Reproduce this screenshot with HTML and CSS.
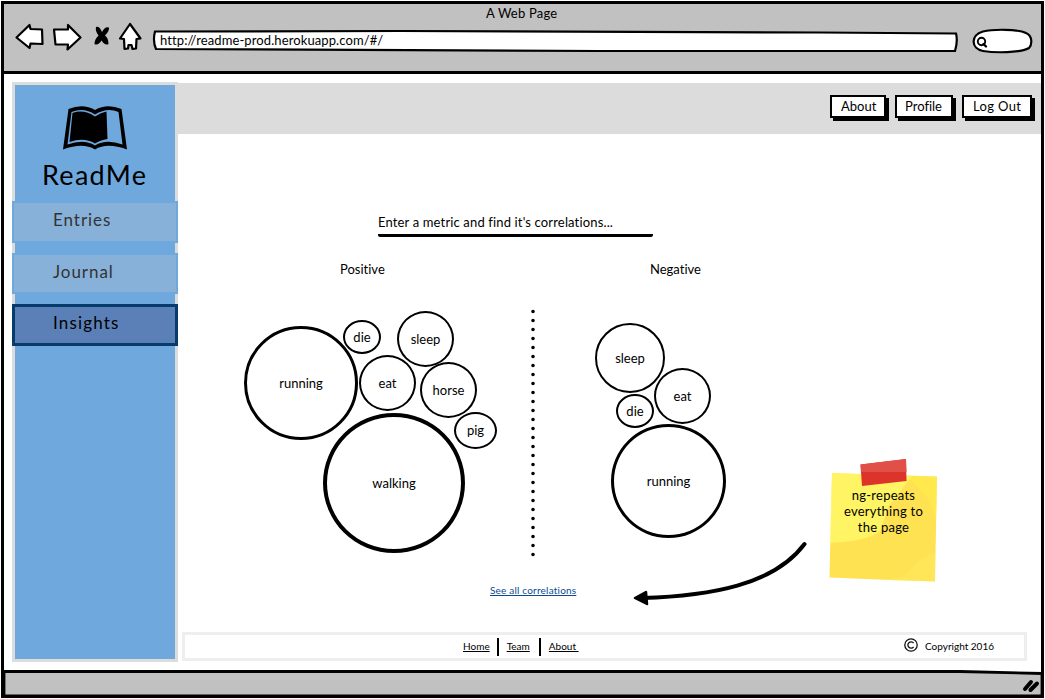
FILE: index.html
```html
<!DOCTYPE html>
<html lang="en">
<head>
<meta charset="utf-8">
<title>A Web Page</title>
<link rel="stylesheet" href="styles.css">
</head>
<body>
<div class="window">
  <header class="chrome">
    <div class="chrome-title"><span class="t-title">A Web Page</span></div>
    <div class="chrome-row">
      <svg class="nav-icons" width="128" height="32" viewBox="14 22 128 32">
        <g fill="#fff" stroke="#000" stroke-width="2.2" stroke-linejoin="round">
          <path d="M16.500 37.500 L29.500 25 L30.500 29 L42 29.500 L42.500 44 L30.500 43.500 L29.500 48 Z"/>
          <path d="M80.500 37.500 L68 25 L68 29.500 L54 29.500 L55.500 44.500 L68 44.500 L67.500 49.500 Z"/>
          <path d="M130 24 L120 38.500 L124 39 L124.500 49 L128 48.500 L128.500 45 L131.500 45 L132.500 49 L136 48.500 L136.500 39 L140.500 38.500 Z"/>
        </g>
        <path d="M96 27 Q99.500 26 102 32 Q105 26 109 27.500 Q109.500 31 105 35.500 Q108.500 38 108.500 44 Q105 46 101.500 40.500 Q98 46 94.500 44 Q94.500 39.500 98.500 35.500 Q95 31 96 27 Z"/>
      </svg>
      <div class="address">
        <svg class="shape" width="806" height="24" viewBox="152 29 806 24"><path d="M155 31.500 L400 31 L820 32.500 L956 33.500 Q958 41 955 51 L600 51 L156 49 Q152.500 41 155 31.500 Z" fill="#fff" stroke="#000" stroke-width="2.200"/></svg>
        <span class="t-url">http://readme-prod.herokuapp.com/#/</span>
      </div>
      <svg class="search" width="62" height="28" viewBox="971 27 62 28">
        <path d="M983 31.500 C993 29 1018 29 1026 33 C1033 36 1032 45 1029 48 C1020 53 995 53 983 51 C971 49 970 35 983 31.500 Z" fill="#fff" stroke="#000" stroke-width="2.200"/>
        <circle cx="981.500" cy="41.500" r="3.700" fill="none" stroke="#000" stroke-width="1.900"/><path d="M983.500 44 L986 46.500" stroke="#000" stroke-width="2.400" stroke-linecap="round"/>
      </svg>
    </div>
  </header>

  <div class="page">
    <aside class="sidebar">
      <svg class="logo" width="64" height="46" viewBox="63 105 64 46">
        <path d="M68.500 109 Q83 103 95 110 Q107 103 121.500 109 L127 149.500 Q107 142 95 149.500 Q83 142 63 149.500 Z" fill="#000"/>
        <path d="M71.500 112 Q84 107 95 114.500 Q107 107 118.500 112 L122.500 144.500 Q106 138.500 95 145.500 Q84 138.500 67.500 144.500 Z" fill="#6fa8dc"/>
        <path d="M72.500 113 Q84 109 95 116.500 Q101 112.500 106.500 111.500 L107.500 139 Q100 140 95 143.500 Q84 137 69.500 142 Z" fill="#000"/>
      </svg>
      <div class="brand"><span class="t-brand">ReadMe</span></div>
      <nav class="menu">
        <a class="item"><span class="t-entries">Entries</span></a>
        <a class="item"><span class="t-journal">Journal</span></a>
        <a class="item active"><span class="t-insights">Insights</span></a>
      </nav>
    </aside>

    <main class="main">
      <div class="topbar">
        <button class="btn about"><span class="t-about">About</span></button>
        <button class="btn profile"><span class="t-profile">Profile</span></button>
        <button class="btn logout"><span class="t-logout">Log Out</span></button>
      </div>
      <div class="metric"><span class="t-metric">Enter a metric and find it's correlations...</span></div>
      <div class="headings">
        <span class="heading"><span class="t-positive">Positive</span></span>
        <span class="heading"><span class="t-negative">Negative</span></span>
      </div>
      <section class="canvas">
        <div class="bubble p-running"><span class="t-running">running</span></div>
        <div class="bubble p-die"><span class="t-die">die</span></div>
        <div class="bubble p-sleep"><span class="t-sleep">sleep</span></div>
        <div class="bubble p-eat"><span class="t-eat">eat</span></div>
        <div class="bubble p-horse"><span class="t-horse">horse</span></div>
        <div class="bubble p-pig"><span class="t-pig">pig</span></div>
        <div class="bubble p-walking"><span class="t-walking">walking</span></div>
        <svg class="divider" width="6" height="254" viewBox="0 0 6 254"><path d="M3 2.500 V246" stroke="#000" stroke-width="3.600" stroke-linecap="round" stroke-dasharray="0 9"/></svg>
        <div class="bubble n-sleep"><span class="t-sleep">sleep</span></div>
        <div class="bubble n-eat"><span class="t-eat">eat</span></div>
        <div class="bubble n-die"><span class="t-die">die</span></div>
        <div class="bubble n-running"><span class="t-running">running</span></div>
        <svg class="arrow" width="176" height="70" viewBox="632 540 176 70">
          <path d="M804.500 544 C774 585 710 596 642 598" fill="none" stroke="#000" stroke-width="4" stroke-linecap="round"/>
          <path d="M635 598 L646 592 L647 604 Z" stroke="#000" stroke-width="2.500" stroke-linejoin="round"/>
        </svg>
        <div class="note">
          <svg class="shape" width="112" height="126" viewBox="828 458 112 126">
            <path d="M832 473 L937 476.500 L935 581.500 L890 580 L829.500 577.500 Z" fill="#ffe252"/>
            <path d="M832 473 L912 476 L889 506 L880 531 Q868 541 830 543 Z" fill="#fffd6e" opacity=".65"/>
            <path d="M907 476 L937 477 L936 520 L929 500 L922 492 Z" fill="#ffef45" opacity=".5"/>
            <path d="M884 580 L905 576 L919 560 L935 552 L935 581.500 Z" fill="#fff067" opacity=".3"/>
            <path d="M860.500 464.500 L906 459 L906.500 481 L862 486 Z" fill="#dc342b"/>
            <path d="M860.500 464.500 L906 459 L906.500 472 L861 472 Z" fill="#e05048"/>
          </svg>
          <p class="note-text"><span class="t-n1">ng-repeats</span><span class="t-n2">everything to</span><span class="t-n3">the page</span></p>
        </div>
        <a class="see-all"><span class="t-see">See all correlations</span></a>
      </section>
      <footer class="footer">
        <nav class="links">
          <a class="link"><span class="t-home">Home</span></a>
          <a class="link"><span class="t-team">Team</span></a>
          <a class="link"><span class="t-fabout">About&nbsp;</span></a>
        </nav>
        <div class="copyright">
          <svg width="14" height="14" viewBox="0 0 14 14" fill="none" stroke="#111" stroke-width="1.300"><circle cx="7" cy="7" r="6.200"/><path d="M9.600 5 A3.200 3.200 0 1 0 9.600 9"/></svg>
          <span class="t-copy">Copyright 2016</span>
        </div>
      </footer>
    </main>
  </div>

  <div class="statusbar">
    <svg class="shape" width="1038" height="29" viewBox="4 669 1038 29"><path d="M4 671.500 L740 671.500 L960 671.500 L1042 673.500 V696 H4 Z" fill="#c1c1c1" stroke="#000" stroke-width="2.800"/><path d="M1025 689 L1031 682 M1030.500 690 L1037 683.500" stroke="#000" stroke-width="4" stroke-linecap="round"/></svg>
  </div>
</div>
</body>
</html>
```
FILE: styles.css
```css
* { box-sizing: border-box; }
body { margin: 0; background: #fff; overflow: hidden; font-family: Lato, "Noto Sans", sans-serif; font-size: 13px; line-height: 16px; color: #000; font-variant-ligatures: none; }
svg { display: block; flex: none; }
span { white-space: nowrap; }
.window { width: 1043px; height: 697px; margin: 1px 0 0 1px; border: 3px solid #000; display: flex; flex-direction: column; }

.chrome { flex: none; height: 70px; background: #c1c1c1; border-bottom: 3px solid #000; }
.chrome-title { height: 18px; padding: 1px 0 0 482px; letter-spacing: .2px; }
.chrome-row { display: flex; padding-left: 10px; }
.nav-icons { margin-right: 10px; }
.address { position: relative; width: 806px; height: 24px; margin-top: 7px; padding: 3px 0 0 8px; letter-spacing: .1px; }
.shape { position: absolute; left: 0; top: 0; }
.address span { position: relative; }
.search { margin: 5px 0 0 13px; }

.page { flex: 1; display: flex; min-height: 0; }
.sidebar { flex: none; width: 166px; height: 580px; margin: 8px 0 0 8px; border: 3px solid #dcdcdc; background: #6fa8dc; }
.logo { margin: 20px 0 0 48px; }
.brand { height: 50px; padding: 11px 0 0 27px; font-size: 27px; line-height: 26px; letter-spacing: 1.300px; }
.menu { display: flex; flex-direction: column; gap: 10px; margin: 0 -3px; }
.item { height: 41.500px; padding: 7px 0 0 39px; border: 2px solid #6fa8dc; background: #87b1d9; color: #333; font-size: 17px; line-height: 20px; letter-spacing: .950px; }
.item.active { border: 3px solid #073b6c; padding: 6px 0 0 38px; background: #5b80b8; color: #000; letter-spacing: 1.150px; }

.main { flex: 1; display: flex; flex-direction: column; padding-top: 9px; }
.topbar { flex: none; height: 51px; background: #dcdcdc; display: flex; justify-content: flex-end; gap: 9px; padding: 12px 9px 0 0; }
.btn { display: flex; height: 23px; border: 2px solid #000; background: #fff; box-shadow: 3px 3px 0 #000; padding: 1px 0 0 9px; font: inherit; font-variant-ligatures: none; color: inherit; }
.about { width: 56px; }
.profile { width: 58px; padding-left: 8px; }
.logout { width: 70px; letter-spacing: .35px; }
.metric { width: 275px; height: 23px; margin: 80px 0 0 200px; border-bottom: 3px solid #000; border-radius: 2px; letter-spacing: .150px; }
.headings { display: grid; grid-template-columns: 310px 1fr; padding-left: 162px; margin-top: 24px; height: 47px; }
.canvas { position: relative; height: 324px; }
.bubble { position: absolute; border: 2px solid #000; border-radius: 50%; display: flex; align-items: center; justify-content: center; padding-bottom: 1px; }
.p-running { left: 66px; top: 18px; width: 114px; height: 114px; border-width: 3px; }
.p-die { left: 165px; top: 12px; width: 38px; height: 34px; }
.p-sleep { left: 219px; top: 3px; width: 57px; height: 56px; }
.p-eat { left: 181px; top: 47px; width: 57px; height: 56px; }
.p-horse { left: 242px; top: 54px; width: 57px; height: 56px; }
.p-pig { left: 276px; top: 104px; width: 43px; height: 37px; }
.p-walking { left: 145px; top: 105px; width: 142px; height: 140px; border-width: 4px; }
.divider { position: absolute; left: 352px; top: 1px; }
.n-sleep { left: 417px; top: 15px; width: 70px; height: 70px; }
.n-eat { left: 476px; top: 60px; width: 57px; height: 56px; }
.n-die { left: 438px; top: 86px; width: 38px; height: 34px; }
.n-running { left: 433px; top: 116px; width: 115px; height: 114px; border-width: 3px; }
.arrow { position: absolute; left: 454px; top: 232px; }
.note { position: absolute; left: 650px; top: 150px; width: 111px; height: 126px; }
.note-text { position: relative; margin: 0; padding-top: 29px; display: flex; flex-direction: column; align-items: center; letter-spacing: .250px; }
.see-all { position: absolute; left: 312px; top: 274px; color: #0b4a92; font-size: 10px; letter-spacing: .200px; text-decoration: underline; }

.footer { height: 29px; width: 845px; margin-left: 4px; border: 3px solid #eee; display: flex; justify-content: space-between; font-size: 10px; }
.links { display: flex; padding: 3px 0 0 278px; }
.link { height: 18px; padding: 0 9px 0 8px; text-decoration: underline; }
.link:first-child { padding: 0 7px 0 0; }
.link + .link { border-left: 2px solid #000; }
.copyright { display: flex; gap: 7px; padding: 3px 30px 0 0; }
.statusbar { position: relative; flex: none; height: 26px; }
```
